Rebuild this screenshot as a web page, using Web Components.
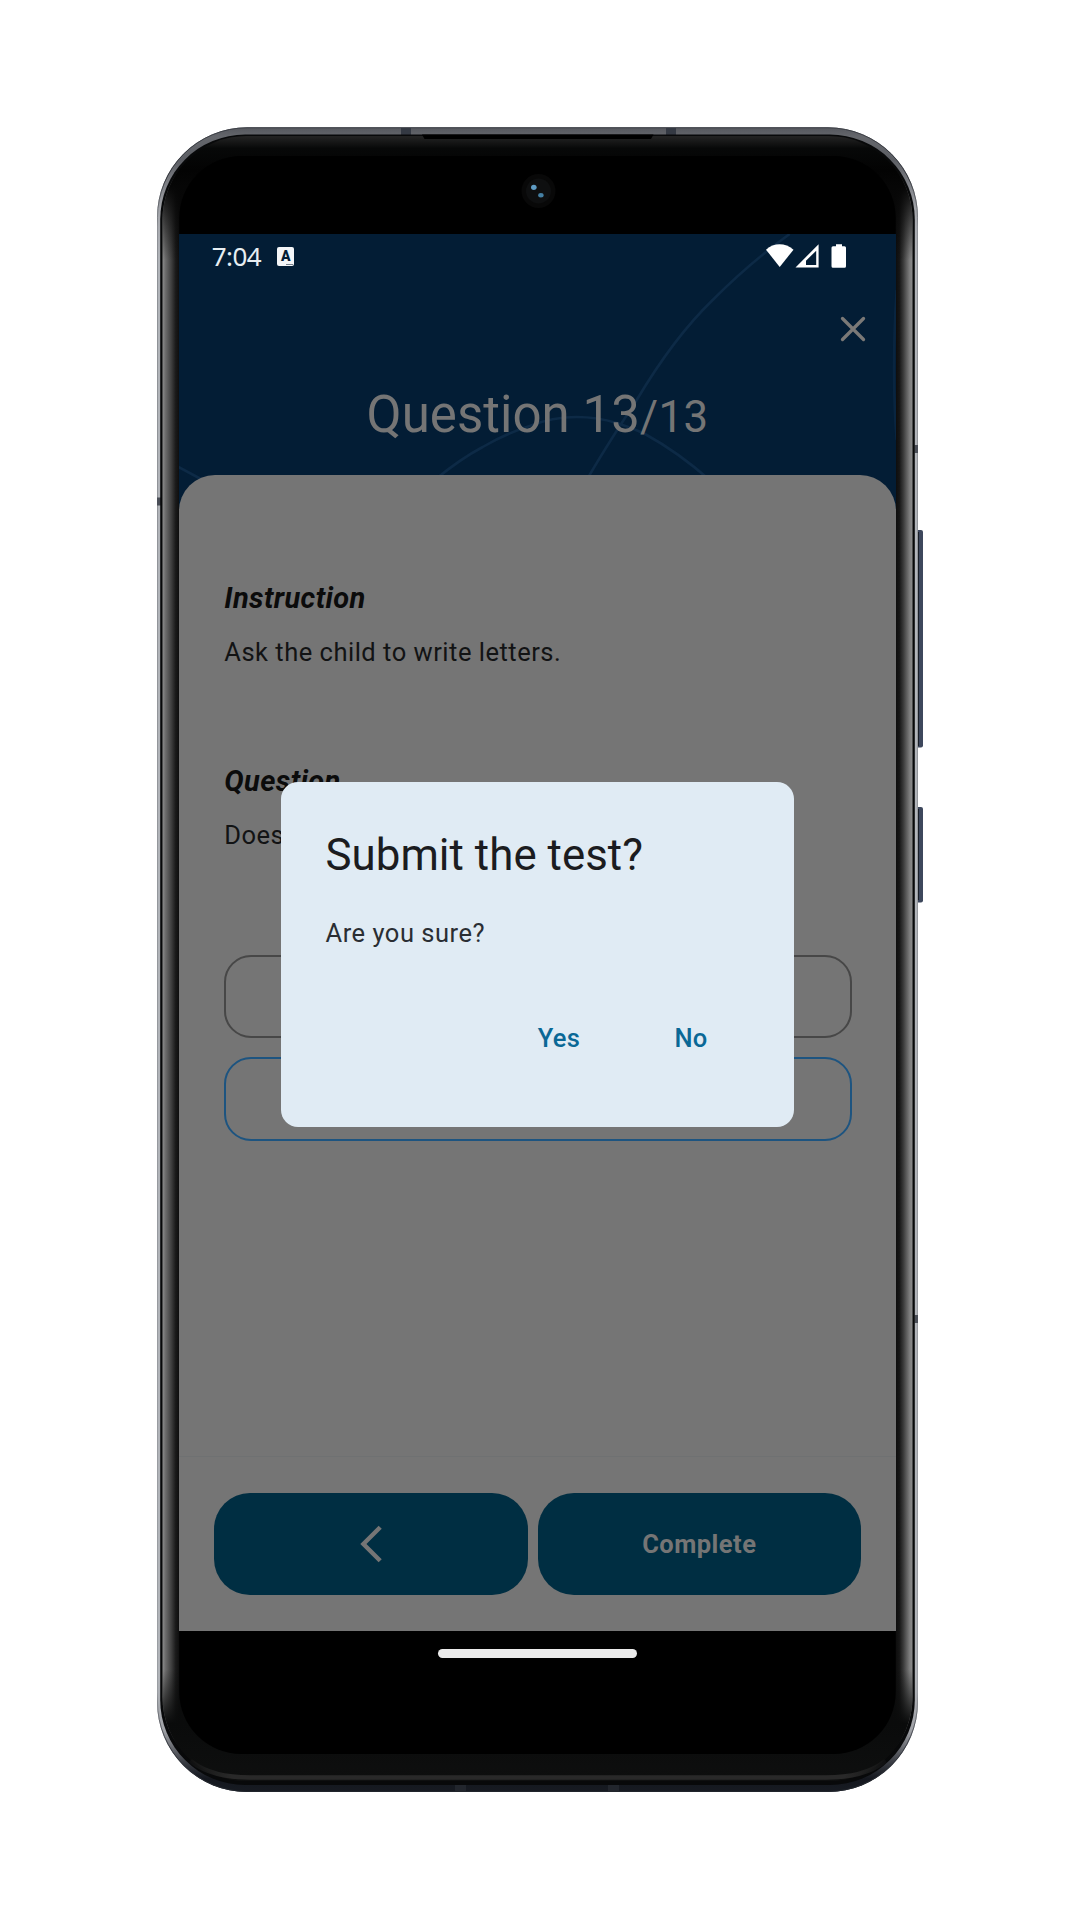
<!DOCTYPE html>
<html lang="en">
<head>
<meta charset="utf-8">
<title>Submit the test?</title>
<style>
  html, body { margin: 0; background: #fff; }
  body { width: 1080px; height: 1920px; overflow: hidden; font-family: Roboto, "Liberation Sans", sans-serif; }
</style>
</head>
<body>
<phone-device>
  <quiz-screen>
    <status-bar slot="status">7:04</status-bar>
    <quiz-header slot="header">Question 13<span slot="total">/13</span></quiz-header>
    <text-block>
      <span slot="label">Instruction</span>Ask the child to write letters.
    </text-block>
    <text-block>
      <span slot="label">Question</span>Does
    </text-block>
    <answer-list></answer-list>
    <quiz-button slot="actions" style="flex:0 0 314px">
      <svg width="22" height="38" viewBox="0 0 22 38" fill="none" stroke="#757575" stroke-width="4.400"><path d="M20.200 2.200 3.400 19 20.200 35.800"/></svg>
    </quiz-button>
    <quiz-button slot="actions" style="flex:0 0 323px">Complete</quiz-button>
    <confirm-dialog slot="dialog">
      <span slot="title">Submit the test?</span>
      Are you sure?
      <text-button slot="actions" style="margin-right:94.500px">Yes</text-button>
      <text-button slot="actions">No</text-button>
    </confirm-dialog>
  </quiz-screen>
</phone-device>

<script>
const define = (name, html) => customElements.define(name, class extends HTMLElement {
  constructor() {
    super();
    this.attachShadow({ mode: 'open' }).innerHTML = html;
  }
});

define('phone-device', `
<style>
  :host { display: block; position: relative; box-sizing: border-box; width: 1080px; height: 1920px; padding: 234px 184.300px 0 179.300px; }
  svg.body { position: absolute; left: 0; top: 0; }
  .content { position: relative; display: flex; flex-direction: column; align-items: center; }
  .pill { width: 198.500px; height: 8.600px; border-radius: 5px; background: #ebebeb; margin-top: 17.700px; }
</style>
<svg class="body" width="1080" height="1920" viewBox="0 0 1080 1920">
  <defs>
    <linearGradient id="rim" gradientUnits="userSpaceOnUse" x1="0" y1="127" x2="0" y2="1792">
      <stop offset="0" stop-color="#55575d"/><stop offset=".006" stop-color="#65676c"/>
      <stop offset=".02" stop-color="#5c5e64"/><stop offset=".05" stop-color="#a4a6ab"/>
      <stop offset=".08" stop-color="#b1b4b9"/><stop offset=".93" stop-color="#b1b4b9"/>
      <stop offset=".963" stop-color="#a0a2a7"/><stop offset=".982" stop-color="#3a3d44"/>
      <stop offset=".992" stop-color="#14171e"/><stop offset="1" stop-color="#171b22"/>
    </linearGradient>
    <linearGradient id="edge" gradientUnits="userSpaceOnUse" x1="0" y1="127" x2="0" y2="1792">
      <stop offset="0" stop-color="#3d4047"/><stop offset=".03" stop-color="#33363c"/>
      <stop offset=".06" stop-color="#8e9196"/><stop offset=".94" stop-color="#9b9ea3"/>
      <stop offset=".97" stop-color="#3a3d44"/><stop offset="1" stop-color="#20242b"/>
    </linearGradient>
    <linearGradient id="glass" gradientUnits="userSpaceOnUse" x1="162.500" y1="0" x2="912.500" y2="0">
      <stop offset="0" stop-color="#8c8c8c"/><stop offset=".004" stop-color="#6c6c6c"/>
      <stop offset=".012" stop-color="#3e3e3e"/><stop offset=".0175" stop-color="#1a1a1a"/>
      <stop offset=".023" stop-color="#0c0c0c"/><stop offset=".977" stop-color="#0c0c0c"/>
      <stop offset=".9825" stop-color="#161616"/><stop offset=".988" stop-color="#3c3c3c"/>
      <stop offset=".996" stop-color="#7c7c7c"/><stop offset="1" stop-color="#8c8c8c"/>
    </linearGradient>
    <linearGradient id="fade" gradientUnits="userSpaceOnUse" x1="0" y1="137" x2="0" y2="1781">
      <stop offset="0" stop-color="#222"/><stop offset=".007" stop-color="#070808"/>
      <stop offset=".02" stop-color="#030303"/><stop offset=".03" stop-color="#060606"/>
      <stop offset=".075" stop-color="#060606" stop-opacity="0"/>
      <stop offset=".932" stop-color="#0a0b0b" stop-opacity="0"/><stop offset=".965" stop-color="#0a0b0b"/>
      <stop offset="1" stop-color="#0e0f0f"/>
    </linearGradient>
    <linearGradient id="lip" gradientUnits="userSpaceOnUse" x1="190" y1="0" x2="886" y2="0">
      <stop offset="0" stop-color="#292929" stop-opacity=".2"/><stop offset=".06" stop-color="#292929"/>
      <stop offset=".94" stop-color="#292929"/><stop offset="1" stop-color="#292929" stop-opacity=".2"/>
    </linearGradient>
  </defs>
  <rect x="915" y="530" width="8" height="217.500" rx="2" fill="#3d475c"/>
  <rect x="917" y="532" width="2" height="214" fill="#1a1f28"/>
  <rect x="915" y="807" width="8" height="95.500" rx="2" fill="#3d475c"/>
  <rect x="917" y="809" width="2" height="91" fill="#1a1f28"/>
  <rect x="157" y="127.300" width="761" height="1664.700" rx="90" fill="url(#rim)"/>
  <rect x="157.500" y="127.800" width="760" height="1663.700" rx="89.500" fill="none" stroke="url(#edge)"/>
  <g fill="#343943">
    <rect x="401" y="128" width="10" height="7"/><rect x="666" y="128" width="10" height="7"/>
    <rect x="157" y="497.500" width="4" height="8" fill="#4a4e57"/><rect x="914.500" y="445" width="3.500" height="8" fill="#4a4e57"/>
    <rect x="914.500" y="1315" width="3.500" height="8" fill="#4a4e57"/>
    <rect x="455" y="1785" width="11" height="6.500" fill="#22262d"/><rect x="608" y="1785" width="11" height="6.500" fill="#22262d"/>
  </g>
  <rect x="160.200" y="134.500" width="754.600" height="1650.500" rx="85" fill="#08090a"/>
  <rect x="162.500" y="136" width="750" height="1645" rx="84" fill="url(#glass)"/>
  <rect x="162.500" y="136" width="750" height="1645" rx="84" fill="url(#fade)"/>
  <path d="M422 134.500H653.500L651 139H424.500Z" fill="#000"/>
  <path d="M192 1762C205 1772 225 1777.500 250 1777.500H826C851 1777.500 871 1772 884 1762" fill="none" stroke="url(#lip)" stroke-width="4.500" stroke-linecap="round"/>
  <rect x="179.300" y="156" width="716.400" height="1598" rx="62" fill="#000"/>
  <circle cx="538.500" cy="191" r="17" fill="#080808"/><circle cx="538.500" cy="191" r="12.500" fill="#0e0f10"/>
  <ellipse cx="533.800" cy="187.300" rx="2.800" ry="2.600" fill="#5f9cc4"/><ellipse cx="540.900" cy="195.300" rx="2.700" ry="2.200" fill="#4580a4"/>
</svg>
<div class="content"><slot></slot><div class="pill"></div></div>`);

define('quiz-screen', `
<style>
  :host { display: flex; flex-direction: column; position: relative; width: 716.400px; height: 1397.300px; background: #031d35; overflow: hidden; }
  .waves { position: absolute; left: 0; top: 0; }
  .top { position: relative; height: 240.500px; display: flex; flex-direction: column; }
  .sheet { position: relative; flex: 1; display: flex; flex-direction: column; background: #757575; border-radius: 36px 36px 0 0; }
  .body { flex: 1; padding: 107.600px 44px 0 45px; }
  .actions { box-sizing: border-box; height: 175.300px; border-top: 1px solid #6f7172; padding: 36.200px 34.500px 0 35px; display: flex; gap: 9.500px; }
  .overlay { position: absolute; inset: 0; padding-top: 547.500px; display: flex; justify-content: center; align-items: flex-start; }
</style>
<svg class="waves" width="717" height="290" viewBox="179.300 234 717 290" fill="none" stroke="#0d2a46" stroke-width="2.600">
  <path d="M790 234C765 252 738 275 713 300C684 328 659 363 637 400C618 429 604 450 587 480"/>
  <path d="M435 480C452 466 466 456 483 447C500 437 514 431 530 426C545 420 560 417 577 417C592 417 604 419 617 423C629 427 638 430 647 435C667 446 686 459 710 480"/>
  <path d="M177 466 203 480"/>
  <path d="M897 290C893.500 340 893.500 400 897 440" stroke-opacity=".7"/>
</svg>
<div class="top"><slot name="status"></slot><slot name="header"></slot></div>
<div class="sheet">
  <div class="body"><slot></slot></div>
  <div class="actions"><slot name="actions"></slot></div>
</div>
<div class="overlay"><slot name="dialog"></slot></div>`);

define('status-bar', `
<style>
  :host { display: flex; align-items: center; height: 45px; padding: 0 48.500px 0 32.500px; font: 26px/45px "Noto Sans", "Open Sans", sans-serif; color: #e8eef2; }
  .time { letter-spacing: -.6px; }
  .badge { width: 17.500px; height: 19px; margin-left: 16px; border-radius: 2px; background: #f4f6f8; color: #031d35; font: 900 14px/18px Roboto, sans-serif; text-align: center; box-sizing: border-box; position: relative; }
  .badge::after { content: ""; position: absolute; right: 1.500px; bottom: 1.500px; width: 7px; height: 1px; background: #77818c; }
  svg { margin-left: auto; }
</style>
<span class="time"><slot></slot></span><span class="badge">A</span>
<svg width="81" height="25" viewBox="766 243.800 81 25" fill="#fff">
  <path d="M766 249.500C774 242.300 785 242.300 793.500 249.500L779.700 266.700Z"/>
  <path fill-rule="evenodd" d="M818.600 244V267.300H795.500ZM816.200 250.500 806 260.500V264.700H816.200Z"/>
  <path d="M836 244H842V246H844.500Q846 246 846 247.500V266Q846 267.500 844.500 267.500H833Q831.500 267.500 831.500 266V247.500Q831.500 246 833 246H836Z"/>
</svg>`);

define('quiz-header', `
<style>
  :host { display: flex; flex-direction: column; color: #757575; }
  .close { display: flex; justify-content: flex-end; padding: 36.800px 30px 0 0; }
  h1 { margin: 43.300px 0 0; font-size: 51px; line-height: 60px; font-weight: 400; letter-spacing: .05px; text-align: center; white-space: pre; }
  .total { font-size: 43.800px; letter-spacing: .4px; }
</style>
<div class="close"><svg width="26" height="26" viewBox="0 0 26 26" fill="none" stroke="#7b7977" stroke-width="3.300" stroke-linecap="round"><path d="M2.500 2.500 23.500 23.500M23.500 2.500 2.500 23.500"/></svg></div>
<h1><slot></slot><span class="total"><slot name="total"></slot></span></h1>`);

define('text-block', `
<style>
  :host { display: block; height: 183.300px; color: #121314; }
  .label { font-size: 29px; line-height: 32px; font-weight: 700; font-style: italic; letter-spacing: .38px; color: #0b0b0b; }
  .text { margin-top: 22px; font-size: 25.500px; line-height: 32px; letter-spacing: .5px; }
</style>
<div class="label"><slot name="label"></slot></div>
<div class="text"><slot></slot></div>`);

define('answer-list', `
<style>
  :host { display: flex; flex-direction: column; gap: 18.500px; margin-top: 6.700px; }
  .option { box-sizing: border-box; height: 83px; border: 2px solid #474747; border-radius: 27px; }
  .option.selected { height: 84.300px; border-color: #1d5480; }
</style>
<div class="option"></div><div class="option selected"></div>`);

define('quiz-button', `
<style>
  :host { display: flex; align-items: center; justify-content: center; height: 101.500px; border-radius: 36px; background: #002e42; color: #757575; font-size: 25.500px; font-weight: 700; letter-spacing: .48px; }
</style>
<slot></slot>`);

define('confirm-dialog', `
<style>
  :host { display: block; box-sizing: border-box; width: 513px; height: 345px; padding: 48.800px 44.500px 0; border-radius: 17px; background: #e0ebf4; color: #1b1c20; }
  .title { font-size: 43.800px; line-height: 51px; letter-spacing: .05px; }
  .text { margin-top: 36.800px; font-size: 25.500px; line-height: 30px; letter-spacing: .52px; color: #2a2e33; }
  .actions { display: flex; justify-content: flex-end; margin-top: 74.900px; padding-right: 42px; }
</style>
<div class="title"><slot name="title"></slot></div>
<div class="text"><slot></slot></div>
<div class="actions"><slot name="actions"></slot></div>`);

define('text-button', `
<style>
  :host { display: block; font-size: 25.500px; line-height: 30px; font-weight: 500; letter-spacing: .2px; color: #0a6896; }
</style>
<slot></slot>`);
</script>
</body>
</html>
